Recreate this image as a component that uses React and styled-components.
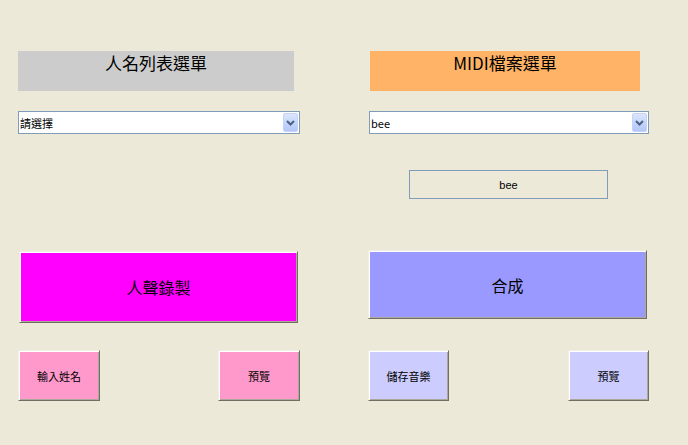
import React from "react";
import styled, { createGlobalStyle } from "styled-components";

const Global = createGlobalStyle`
  html, body { margin: 0; padding: 0; background: #ece9d8; }
  body { font-family: "Noto Sans CJK TC", "Noto Sans", sans-serif; color: #000; }
`;

const Page = styled.div`
  display: flex;
  gap: 68px;
  padding-left: 18px;
  height: 445px;
  box-sizing: border-box;
  background: #ece9d8;
`;

const Column = styled.div`
  display: flex;
  flex-direction: column;
  width: ${(p) => p.$w}px;
`;

const Title = styled.div`
  margin-top: 51px;
  margin-left: ${(p) => p.$ml || 0}px;
  width: ${(p) => p.$w}px;
  height: 40px;
  background: ${(p) => p.$bg};
  display: flex;
  justify-content: center;
  align-items: flex-start;
  font-size: 17px;
  line-height: 24px;
  padding-top: 0px;
  box-sizing: border-box;
`;

const Select = styled.div`
  margin-top: 20px;
  margin-left: ${(p) => p.$ml || 0}px;
  width: ${(p) => p.$w}px;
  height: 23px;
  box-sizing: border-box;
  border: 1px solid #7f9db9;
  background: #fff;
  display: flex;
  align-items: center;
  justify-content: space-between;
  font-family: "Noto Sans CJK TC", "Liberation Sans", sans-serif;
  font-size: 11px;
  padding-left: 1px;
`;

const DropBtn = styled.div`
  width: 15px;
  height: 19px;
  margin-right: 1px;
  border-radius: 2px;
  background: linear-gradient(180deg, #dce6fb 0%, #c1d3fb 60%, #b4c8f6 100%);
  border: 1px solid #c3d3fd;
  box-sizing: border-box;
  display: flex;
  align-items: center;
  justify-content: center;
`;

const ValueBox = styled.div`
  margin-top: 36px;
  margin-left: 41px;
  width: 199px;
  height: 29px;
  box-sizing: border-box;
  border: 1px solid #7f9db9;
  display: flex;
  align-items: center;
  justify-content: center;
  font-family: "Liberation Sans", sans-serif;
  font-size: 11px;
`;

const Button = styled.div`
  box-sizing: border-box;
  width: ${(p) => p.$w}px;
  height: ${(p) => p.$h}px;
  background: ${(p) => p.$bg};
  border-top: 1px solid #f1efe2;
  border-left: 1px solid #f1efe2;
  border-right: 1px solid #716f64;
  border-bottom: 1px solid #716f64;
  box-shadow: inset 1px 1px 0 #ffffff, inset -1px -1px 0 #aca899;
  display: flex;
  align-items: center;
  justify-content: center;
  font-size: ${(p) => p.$fs}px;
`;

const BigButton = styled(Button)`
  margin-top: ${(p) => p.$mt}px;
  margin-left: ${(p) => p.$ml || 0}px;
`;

const SmallRow = styled.div`
  margin-top: ${(p) => p.$mt}px;
  display: flex;
  justify-content: space-between;
`;

const Chevron = () => (
  <svg width="9" height="6" viewBox="0 0 9 6">
    <path d="M1 1 L4.5 4.5 L8 1" fill="none" stroke="#4d6185" strokeWidth="2" />
  </svg>
);

export default function App() {
  return (
    <>
      <Global />
      <Page>
        <Column $w={282}>
          <Title $w={276} $bg="#cccccc">人名列表選單</Title>
          <Select $w={282}>
            <span>請選擇</span>
            <DropBtn><Chevron /></DropBtn>
          </Select>
          <BigButton $mt={117} $ml={1} $w={279} $h={72} $bg="#ff00ff" $fs={16}>人聲錄製</BigButton>
          <SmallRow $mt={27}>
            <Button $w={82} $h={51} $bg="#ff99cc" $fs={11}>輸入姓名</Button>
            <Button $w={82} $h={51} $bg="#ff99cc" $fs={11}>預覽</Button>
          </SmallRow>
        </Column>
        <Column $w={281}>
          <Title $w={270} $ml={2} $bg="#ffb366">MIDI檔案選單</Title>
          <Select $w={280} $ml={1}>
            <span>bee</span>
            <DropBtn><Chevron /></DropBtn>
          </Select>
          <ValueBox>bee</ValueBox>
          <BigButton $mt={51} $w={279} $h={69} $bg="#9999ff" $fs={16}>合成</BigButton>
          <SmallRow $mt={31}>
            <Button $w={81} $h={51} $bg="#ccccff" $fs={11}>儲存音樂</Button>
            <Button $w={81} $h={51} $bg="#ccccff" $fs={11}>預覽</Button>
          </SmallRow>
        </Column>
      </Page>
    </>
  );
}
